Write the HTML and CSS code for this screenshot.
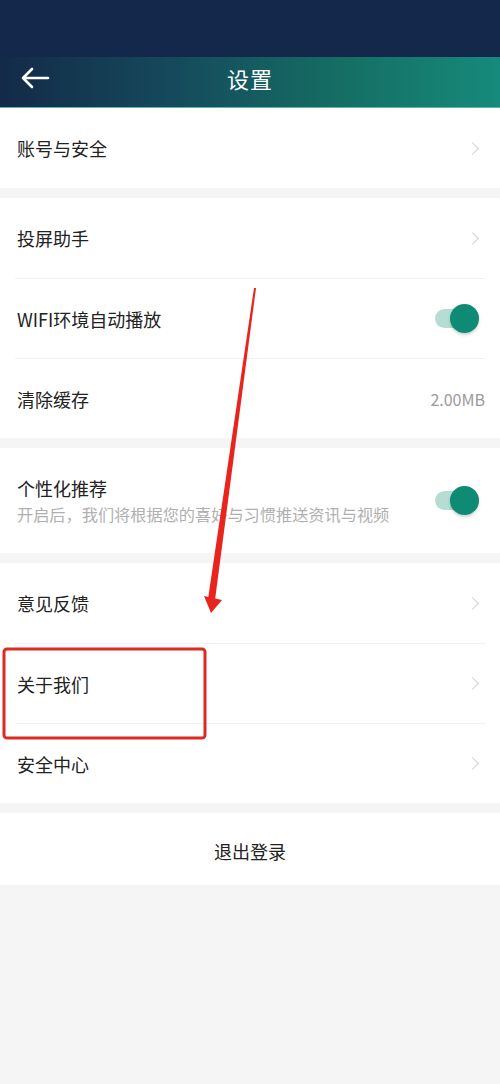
FILE: index.html
```html
<!DOCTYPE html>
<html>
<head>
    <meta charset="UTF-8">
    <link rel="stylesheet" href="styles.css">
</head>
<body>
    <div class="page">
        <div class="status-bar"></div>
        <div class="header">
            <svg class="back" width="30" height="22" viewBox="0 0 30 22">
                <path d="M28 11H3M12 2L3 11l9 9" fill="none" stroke="#fff" stroke-width="2.6" stroke-linecap="round" stroke-linejoin="round"/>
            </svg>
            <div class="title">设置</div>
        </div>

        <div class="group">
            <div class="row">
                <span class="label">账号与安全</span>
                <span class="chevron"></span>
            </div>
        </div>

        <div class="group">
            <div class="row">
                <span class="label">投屏助手</span>
                <span class="chevron"></span>
            </div>
            <div class="row">
                <span class="label">WIFI环境自动播放</span>
                <span class="switch"><span class="knob"></span></span>
            </div>
            <div class="row">
                <span class="label">清除缓存</span>
                <span class="value">2.00MB</span>
            </div>
        </div>

        <div class="group">
            <div class="row tall">
                <div class="text">
                    <div class="label">个性化推荐</div>
                    <div class="desc">开启后，我们将根据您的喜好与习惯推送资讯与视频</div>
                </div>
                <span class="switch"><span class="knob"></span></span>
            </div>
        </div>

        <div class="group">
            <div class="row">
                <span class="label">意见反馈</span>
                <span class="chevron"></span>
            </div>
            <div class="row">
                <span class="label">关于我们</span>
                <span class="chevron"></span>
            </div>
            <div class="row">
                <span class="label">安全中心</span>
                <span class="chevron"></span>
            </div>
        </div>

        <div class="group">
            <div class="logout">退出登录</div>
        </div>

        <svg class="marks" width="500" height="1084" viewBox="0 0 500 1084">
            <polygon points="254,288 256,288 215,600 208,599" fill="#e8241c"/>
            <polygon points="204,596 222,600 211,613" fill="#e8241c"/>
            <rect x="4" y="649" width="201" height="89" rx="3" fill="none" stroke="#dd2b22" stroke-width="3"/>
        </svg>
    </div>
</body>
</html>
```

FILE: styles.css
```css
body {
    margin: 0;
    background: #f5f5f5;
    font-family: "Noto Sans CJK SC", "Noto Sans", sans-serif;
}
.page {
    position: relative;
    width: 500px;
    min-height: 1084px;
}
.status-bar {
    height: 57px;
    background: #13284a;
}
.header {
    height: 51px;
    display: flex;
    align-items: center;
    justify-content: center;
    position: relative;
    background: linear-gradient(90deg, #132a48 0%, #154a5c 35%, #157064 70%, #168a7c 100%);
    border-bottom: 1px solid #5fb5ab;
    box-sizing: border-box;
}
.back {
    position: absolute;
    left: 20px;
    top: 10px;
}
.title {
    color: #fff;
    font-size: 22px;
    letter-spacing: 1px;
    margin-top: -8px;
}
.group {
    background: #fff;
    margin-bottom: 10px;
}
.row {
    height: 80px;
    display: flex;
    align-items: center;
    justify-content: space-between;
    margin: 0 15px;
    padding: 0 2px;
    border-top: 1px solid #f1f1f1;
    box-sizing: border-box;
}
.row:first-child {
    border-top: none;
}
.row.tall {
    height: 105px;
}
.label {
    font-size: 18px;
    color: #222;
}
.desc {
    font-size: 16.2px;
    color: #b0b0b0;
    margin-top: 1px;
}
.value {
    font-size: 16px;
    color: #9a9a9a;
    margin-right: -2px;
}
.chevron {
    width: 8px;
    height: 8px;
    border-top: 1.5px solid #d0d0d0;
    border-right: 1.5px solid #d0d0d0;
    transform: rotate(45deg);
    margin-right: 6px;
}
.switch {
    position: relative;
    width: 31px;
    height: 19px;
    border-radius: 10px;
    background: #b6ddd4;
    margin-right: 17px;
}
.knob {
    position: absolute;
    right: -13px;
    top: -5px;
    width: 29px;
    height: 29px;
    border-radius: 50%;
    background: #0e8a75;
    box-shadow: 0 2px 3px rgba(0, 0, 0, 0.18);
}
.logout {
    height: 72px;
    display: flex;
    align-items: center;
    justify-content: center;
    font-size: 18px;
    color: #222;
    padding-top: 4px;
    box-sizing: border-box;
}
.marks {
    position: absolute;
    left: 0;
    top: 0;
    pointer-events: none;
}
```
